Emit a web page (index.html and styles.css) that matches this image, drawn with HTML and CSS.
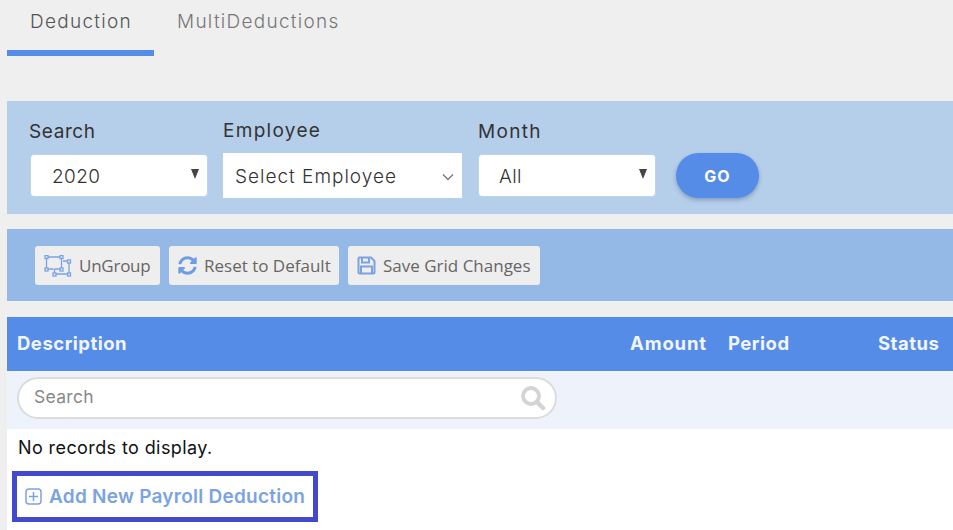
FILE: index.html
```html
<!DOCTYPE html>
<html lang="en">
<head>
<meta charset="utf-8">
<title>Deduction</title>
<link rel="stylesheet" href="styles.css">
</head>
<body>
<div class="page">
  <nav class="tabs">
    <a class="tab tab-active">Deduction</a>
    <a class="tab tab-other">MultiDeductions</a>
  </nav>
  <section class="filters">
    <div class="field field-search">
      <label class="field-label">Search</label>
      <div class="select"><span>2020</span><i class="tri"></i></div>
    </div>
    <div class="field field-employee">
      <label class="field-label">Employee</label>
      <div class="select select-employee"><span>Select Employee</span>
        <svg class="chev" width="12" height="8" viewBox="0 0 12 8"><path d="M1 1.5l5 5 5-5" fill="none" stroke="#777" stroke-width="1.3"/></svg>
      </div>
    </div>
    <div class="field field-month">
      <label class="field-label">Month</label>
      <div class="select"><span>All</span><i class="tri"></i></div>
    </div>
    <button class="go">GO</button>
  </section>
  <section class="toolbar">
    <button class="tool tool-group">
      <svg width="28" height="22" viewBox="0 0 28 22" fill="none" stroke="#7ba3e3" stroke-width="1.3">
        <path d="M2.500 2h15M2.500 2v12M2.500 14h7M17.500 2v7M10.500 19h14M25 6.500v12.500M19 6h6M10.500 14v5M17.500 9v5h-7"/>
        <g fill="#e6eaf2"><rect x="1" y="0.500" width="3" height="3"/><rect x="16" y="0.500" width="3" height="3"/><rect x="1" y="13" width="3" height="3"/><rect x="16" y="13" width="3" height="3"/><rect x="23.500" y="5" width="3" height="3"/><rect x="23.500" y="18" width="3" height="3"/><rect x="9" y="18" width="3" height="3"/></g>
      </svg>
      <span>UnGroup</span>
    </button>
    <button class="tool tool-reset">
      <svg width="19" height="19" viewBox="0 0 512 512"><path fill="#6f9de3" d="M370.7 133.3C339.5 104 298.9 88 255.800 88c-77.500.1-144.300 53.200-162.800 126.900-1.300 5.400-6.100 9.100-11.600 9.100H24.100c-7.500 0-13.200-6.800-11.800-14.200C33.900 94.900 134.800 8 256 8c66.400 0 126.800 26.100 171.300 68.700L463 41C478.100 25.900 504 36.600 504 57.900V192c0 13.300-10.700 24-24 24H345.900c-21.400 0-32.100-25.900-17-41l41.800-41.700zM32 296h134.100c21.400 0 32.100 25.900 17 41l-41.800 41.800c31.300 29.300 71.800 45.300 114.900 45.200 77.400-.1 144.300-53.100 162.800-126.800 1.300-5.400 6.100-9.100 11.600-9.100h57.300c7.500 0 13.200 6.800 11.800 14.200C478.100 417.100 377.200 504 256 504c-66.400 0-126.800-26.100-171.300-68.700L49 471C33.900 486.100 8 475.400 8 454.100V320c0-13.300 10.700-24 24-24z"/></svg>
      <span>Reset to Default</span>
    </button>
    <button class="tool tool-save">
      <svg width="19" height="19" viewBox="0 0 19 19" fill="none" stroke="#7ba3e3" stroke-width="2">
        <path d="M1.500 2.500a1 1 0 0 1 1-1h11.500l3.500 3.500v11.500a1 1 0 0 1-1 1h-14a1 1 0 0 1-1-1z"/>
        <path d="M5 2v4.500h7V2M4 17v-6.500h11V17"/>
      </svg>
      <span>Save Grid Changes</span>
    </button>
  </section>
  <section class="grid">
    <header class="grid-head">
      <span class="col col-desc">Description</span>
      <span class="col col-amount">Amount</span>
      <span class="col col-period">Period</span>
      <span class="col col-status">Status</span>
    </header>
    <div class="grid-filter">
      <div class="searchbox">
        <span class="placeholder">Search</span>
        <svg width="26" height="26" viewBox="0 0 26 26" fill="none" stroke="#d4d4d4"><circle cx="11" cy="11" r="8" stroke-width="3.800"/><path d="M17 17l6 6" stroke-width="4.500" stroke-linecap="round"/></svg>
      </div>
    </div>
    <p class="empty">No records to display.</p>
    <a class="addnew">
      <svg width="17" height="17" viewBox="0 0 17 17" fill="none" stroke="#7ba3e3" stroke-width="1.500"><rect x="1" y="1" width="15" height="15" rx="3"/><path d="M8.500 4v9M4 8.500h9"/></svg>
      <span>Add New Payroll Deduction</span>
    </a>
  </section>
</div>
</body>
</html>
```
FILE: styles.css
```css
* { box-sizing: border-box; }
html, body { margin: 0; height: 100%; }
body {
  background: #efefef;
  font-family: "Inter", "Liberation Sans", sans-serif;
  color: #333;
  overflow: hidden;
}
.page { padding-left: 7px; }

.tabs { display: flex; height: 56px; }
.tab { font-size: 19px; font-weight: 300; line-height: 44px; height: 56px; letter-spacing: 1.27px; }
.tab-active {
  width: 147px;
  padding-left: 23px;
  color: #555;
  border-bottom: 6px solid #558ce7;
}
.tab-other { margin-left: 23px; color: #777; }

.filters {
  margin-top: 45px;
  height: 113px;
  background: #b5ceea;
  display: flex;
}
.field { display: flex; flex-direction: column; }
.field-label { font-size: 19px; line-height: 24px; color: #333; letter-spacing: 1.3px; }
.field-search { margin-left: 22px; padding-top: 19px; width: 194px; }
.field-search .field-label { letter-spacing: 0.6px; }
.field-employee { padding-top: 18px; width: 255px; }
.field-month { padding-top: 19px; width: 198px; }
.select {
  margin-top: 10px;
  width: 178px;
  height: 43px;
  background: #fff;
  border: 1px solid #bcd3ee;
  border-radius: 4px;
  font-size: 19px;
  font-weight: 300;
  color: #333;
  letter-spacing: 0.4px;
  display: flex;
  align-items: center;
  justify-content: space-between;
  padding: 2px 8px 0 20px;
}
.field-search .select { margin-left: 1px; padding-left: 21px; }
.select-employee {
  width: 239px;
  height: 45px;
  border: 0;
  border-radius: 0;
  padding: 2px 8px 0 12px;
  letter-spacing: 1px;
}
.tri {
  width: 0;
  height: 0;
  margin-bottom: 5px;
  border-left: 4.500px solid transparent;
  border-right: 4.500px solid transparent;
  border-top: 10px solid #444;
}
.go {
  align-self: flex-start;
  margin-top: 52px;
  width: 83px;
  height: 45px;
  border: 0;
  border-radius: 23px;
  background: #558ce7;
  color: #fff;
  font: 700 16px "Inter", sans-serif;
  letter-spacing: 1px;
  box-shadow: 0 2px 4px rgba(60, 80, 120, .4);
}

.toolbar {
  margin-top: 15px;
  height: 72px;
  background: #94b9e7;
  display: flex;
  gap: 9px;
  padding: 17px 0 0 28px;
}
.tool {
  height: 39px;
  border: 0;
  border-radius: 3px;
  background: #eeeeee;
  color: #666;
  font: 17px "Open Sans", sans-serif;
  display: flex;
  align-items: center;
  padding: 0;
  white-space: nowrap;
}
.tool-group { width: 125px; padding-left: 9px; gap: 7px; letter-spacing: -0.25px; }
.tool-reset { width: 170px; padding-left: 9px; gap: 7px; }
.tool-save { width: 192px; padding-left: 9px; gap: 7px; }

.grid { margin-top: 16px; background: #fff; height: 213px; }
.grid-head {
  height: 54px;
  padding-bottom: 2px;
  background: #558ce7;
  color: #f2f5fc;
  font-size: 18.500px;
  font-weight: 700;
  letter-spacing: 0.5px;
  display: flex;
  align-items: center;
}
.col-desc { margin-left: 10px; width: 613px; }
.col-amount { width: 98px; letter-spacing: 0.85px; }
.col-period { width: 150px; }
.grid-filter { height: 58px; background: #edf2fb; padding-top: 6px; }
.searchbox {
  margin-left: 10px;
  width: 540px;
  height: 42px;
  background: #fff;
  border: 2px solid #dcdcdc;
  border-radius: 21px;
  display: flex;
  align-items: center;
  justify-content: space-between;
  padding: 0 9px 0 15px;
  font-size: 17.500px;
  color: #888;
  letter-spacing: 0.3px;
}
.placeholder { margin-bottom: 3px; }
.empty {
  margin: 0;
  height: 42px;
  padding: 7px 0 0 11px;
  font-size: 18px;
  line-height: 24px;
  color: #111;
  letter-spacing: 0.4px;
}
.addnew {
  margin-left: 5px;
  width: 306px;
  height: 51px;
  border: 5px solid #4349cd;
  display: flex;
  align-items: center;
  gap: 7px;
  padding-left: 8px;
  color: #7ba3e3;
  font-size: 19px;
  font-weight: 600;
  letter-spacing: 0.25px;
}
```
